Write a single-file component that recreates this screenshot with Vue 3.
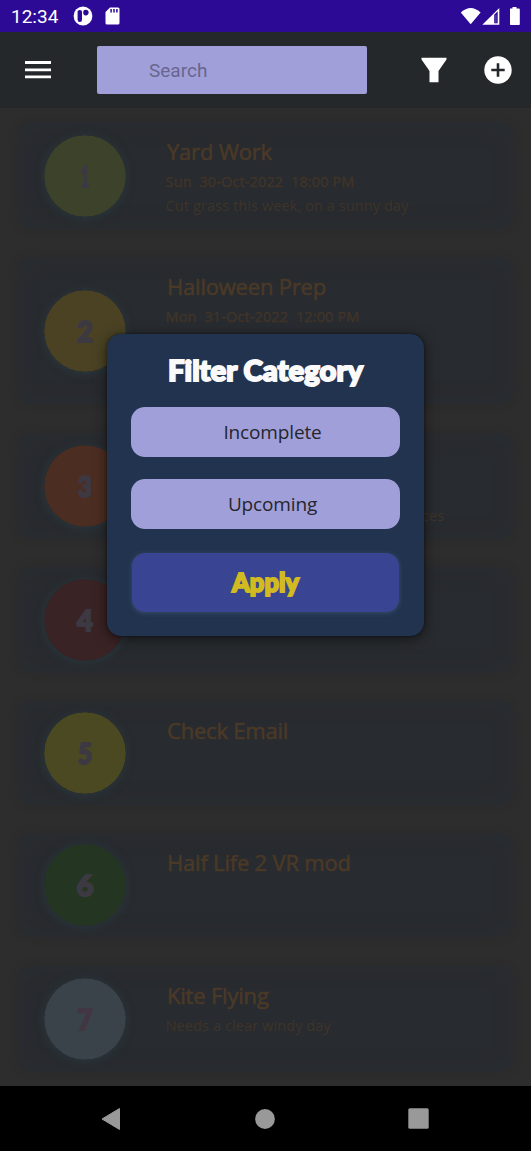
<script setup>
const tasks = [
  { n: '1', dw: 9, color: '#3d432b', height: 107, title: 'Yard Work', date: 'Sun  30-Oct-2022  18:00 PM', note: 'Cut grass this week, on a sunny day' },
  { n: '2', dw: 16, color: '#4a4223', height: 147, title: 'Halloween Prep', date: 'Mon  31-Oct-2022  12:00 PM' },
  { n: '3', dw: 14, color: '#4c2d22', height: 106, tail: 'ces' },
  { n: '4', dw: 16, color: '#3a2324', height: 106 },
  { n: '5', dw: 14, color: '#4a4922', height: 104, title: 'Check Email' },
  { n: '6', dw: 17, color: '#243622', height: 104, title: 'Half Life 2 VR mod' },
  { n: '7', dw: 15, color: '#394349', height: 106, title: 'Kite Flying', note: 'Needs a clear windy day', ink: '#413742' },
]
</script>

<template>
  <div class="phone">
    <div class="status">
      <span class="clock">12:34</span>
      <svg class="s-app" width="20" height="20" viewBox="0 0 20 20">
        <circle cx="10" cy="10" r="9.4" fill="#fff" />
        <path d="M4.600 5.600q0-1.600 2.200-1.600t2.200 1.600v8.200a2.200 2.200 0 0 1-4.400 0z" fill="#2d0a96" />
        <circle cx="12.800" cy="6.600" r="2.800" fill="#2d0a96" />
        <path d="M9.700 3.600v13" stroke="#fff" stroke-width="1" />
      </svg>
      <svg class="s-sd" width="15" height="18" viewBox="0 0 15 18">
        <path d="M5 .5h8q1.500 0 1.500 1.500v14q0 1.500-1.500 1.500H2q-1.500 0-1.500-1.500V5z" fill="#fff" />
        <path d="M6.100 2v3.500M9 2v3.500M11.900 2v3.500" stroke="#2d0a96" stroke-width="1.500" />
      </svg>
      <span class="grow"></span>
      <svg width="66" height="20" viewBox="0 0 66 20">
        <path d="M.8 6.500Q10.700-2.500 20.600 6.500L10.700 18.300z" fill="#fff" />
        <path d="M22.300 18.800 39.300 2v16.800z" fill="#fff" />
        <path d="M34.200 8.800 37.700 5.300v12h-3.500z" fill="#2d0a96" />
        <path d="M35.900 9v8.300" stroke="#6b54b5" stroke-width="1" />
        <path d="M50 2.600h2.500V1.100h4v1.500H59q.8 0 .8.800v14.800q0 .8-.8.800h-8.200q-.8 0-.8-.8z" fill="#fff" />
      </svg>
    </div>

    <div class="toolbar">
      <svg class="menu" width="26" height="18" viewBox="0 0 26 18">
        <path d="M0 1.500h26M0 8.800h26M0 15.800h26" stroke="#fff" stroke-width="2.800" />
      </svg>
      <div class="search">Search</div>
      <svg class="funnel" width="26" height="26" viewBox="0 0 26 26">
        <path d="M.5.700h25v1.800L17.500 14v11.200h-9V14L.5 2.500z" fill="#fff" />
      </svg>
      <svg class="add" width="28" height="28" viewBox="0 0 28 28">
        <circle cx="14" cy="14" r="13.700" fill="#fff" />
        <path d="M14 7.300v13.400M7.300 14h13.400" stroke="#24282a" stroke-width="2.600" />
      </svg>
    </div>

    <div class="list">
      <div v-for="t in tasks" :key="t.n" class="card" :style="{ height: t.height + 'px' }">
        <svg class="badge" width="82" height="82" viewBox="0 0 82 82">
          <circle cx="41" cy="41" r="40.800" :fill="t.color" />
          <text :x="41 - t.dw / 2" y="51.500" :textLength="t.dw" lengthAdjust="spacingAndGlyphs" class="digit" :style="{ fill: t.ink || '#3c3943', stroke: t.ink || '#3c3943' }">{{ t.n }}</text>
        </svg>
        <div class="info">
          <div v-if="t.title" class="title">{{ t.title }}</div>
          <div v-if="t.date" class="date">{{ t.date }}</div>
          <div v-if="t.note" class="note" :class="{ solo: !t.date }">{{ t.note }}</div>
          <div v-if="t.tail" class="tail">{{ t.tail }}</div>
        </div>
      </div>
    </div>

    <div class="nav">
      <svg width="20" height="24" viewBox="0 0 20 24"><path d="M1 12 18.500 1.500v21z" fill="#999" stroke="#999" stroke-width="1" stroke-linejoin="round" /></svg>
      <svg width="20" height="20" viewBox="0 0 20 20"><circle cx="10" cy="10" r="9.900" fill="#999" /></svg>
      <svg width="21" height="21" viewBox="0 0 21 21"><rect x=".3" y=".3" width="20.400" height="20.400" rx="1.500" fill="#999" /></svg>
    </div>

    <div class="dialog">
      <svg class="heading" width="204" height="40" viewBox="0 0 204 40">
        <text x="4" y="30" textLength="195" lengthAdjust="spacingAndGlyphs" class="display">Filter Category</text>
      </svg>
      <div class="option">Incomplete</div>
      <div class="option second">Upcoming</div>
      <div class="apply">
        <svg width="76" height="40" viewBox="0 0 76 40">
          <text x="4" y="28.500" textLength="67" lengthAdjust="spacingAndGlyphs" class="display gold">Apply</text>
        </svg>
      </div>
    </div>
  </div>
</template>

<style>
body { margin: 0; background: #000; }
</style>

<style scoped>
.phone {
  position: relative;
  width: 531px;
  height: 1151px;
  overflow: hidden;
  display: flex;
  flex-direction: column;
  background: #2d2d2d;
  font-family: "Open Sans", "Noto Sans", sans-serif;
}
svg { display: block; flex: none; }
.grow { flex: 1; }
.status {
  height: 32px;
  flex: none;
  box-sizing: border-box;
  display: flex;
  align-items: center;
  padding: 0 5px 0 11px;
  background: #2d0a96;
}
.clock { width: 62px; padding-top: 2px; font: 19px/32px Roboto, sans-serif; color: #fff; }
.s-sd { margin-left: 12px; }
.toolbar {
  height: 76px;
  flex: none;
  box-sizing: border-box;
  display: flex;
  align-items: center;
  padding: 0 18px 0 25px;
  background: #24282a;
}
.search {
  width: 270px;
  height: 48px;
  box-sizing: border-box;
  margin-left: 46px;
  padding-left: 52px;
  border-radius: 2px;
  background: #a19fd9;
  color: #68668f;
  font: 19px/49px Roboto, sans-serif;
}
.funnel { margin-left: 54px; }
.add { margin-left: 37px; }
.list {
  height: 978px;
  flex: none;
  box-sizing: border-box;
  display: flex;
  flex-direction: column;
  gap: 28.300px;
  padding: 14px 17px 0;
}
.card {
  flex: none;
  box-sizing: border-box;
  display: flex;
  align-items: center;
  padding-left: 26.600px;
  border-radius: 15px;
  background: #282b2f;
  box-shadow: 0 0 8px rgba(40, 40, 40, .25), inset 0 0 20px #2a2e32;
}
.badge { border-radius: 50%; box-shadow: 0 1px 10px #29393f; }
.digit { font: 900 29px Lato, sans-serif; stroke-width: 2px; }
.info { align-self: flex-start; padding: 14px 0 0 40px; white-space: pre; }
.title { padding-left: 1.400px; font-size: 22px; line-height: 30px; letter-spacing: -.2px; color: #4a3927; -webkit-text-stroke: .6px #4a3927; }
.date { margin-top: 5px; font-size: 14.500px; line-height: 22px; letter-spacing: .12px; color: #403429; -webkit-text-stroke: .5px #403429; }
.note { margin-top: 3px; font-size: 14.500px; line-height: 20px; letter-spacing: .1px; color: #3f3429; }
.solo { margin-top: 6px; }
.tail { margin: 58px 0 0 256px; font-size: 15px; line-height: 20px; color: #3f3429; }
.nav {
  height: 65px;
  flex: none;
  box-sizing: border-box;
  display: flex;
  justify-content: space-between;
  align-items: center;
  padding: 0 102px 0 101px;
  background: #000;
}
.dialog {
  position: absolute;
  left: 107px;
  top: 334px;
  width: 317px;
  height: 302px;
  box-sizing: border-box;
  padding: 17px 24px 0;
  border-radius: 14px;
  background: #22334f;
  box-shadow: 0 3px 14px rgba(0, 0, 0, .5), 0 0 3px rgba(0, 0, 0, .5);
}
.heading { margin: 0 0 16px 33px; }
.display { font: 900 29px Lato, sans-serif; fill: #fafafa; stroke: #fafafa; stroke-width: 1.900px; }
.gold { font-size: 26px; fill: #d1bb20; stroke: #d1bb20; }
.option {
  height: 50px;
  border-radius: 14px;
  background: #a19fd9;
  color: #24262c;
  font-size: 19px;
  line-height: 50px;
  letter-spacing: -.15px;
  text-align: center;
  padding-left: 14px;
}
.second { margin-top: 22px; }
.apply {
  height: 59px;
  margin: 24px 1px 0;
  display: flex;
  align-items: center;
  justify-content: center;
  border-radius: 13px;
  background: #394492;
  box-shadow: 0 1px 5px #374f69;
}
</style>
